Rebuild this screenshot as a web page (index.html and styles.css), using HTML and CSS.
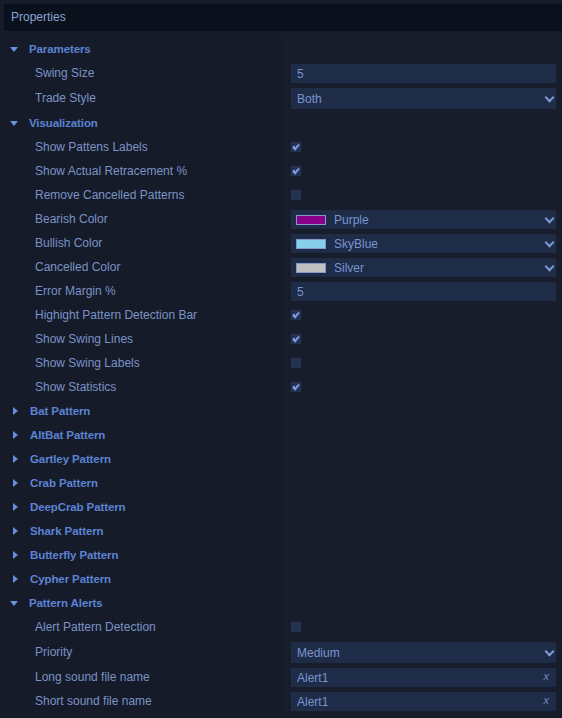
FILE: index.html
```html
<!DOCTYPE html>
<html>
<head>
<meta charset="utf-8">
<link rel="stylesheet" href="styles.css">
</head>
<body>
<div class="panel">
  <div class="title">Properties</div>
  <div class="list">
    <div class="row section"><span class="tri down"></span><span class="sec-label">Parameters</span></div>
    <div class="row"><span class="label">Swing Size</span><div class="input">5</div></div>
    <div class="row tall"><span class="label">Trade Style</span><div class="input select tallin">Both<span class="chev"></span></div></div>

    <div class="row section"><span class="tri down"></span><span class="sec-label">Visualization</span></div>
    <div class="row"><span class="label">Show Pattens Labels</span><span class="check on"></span></div>
    <div class="row"><span class="label">Show Actual Retracement %</span><span class="check on"></span></div>
    <div class="row"><span class="label">Remove Cancelled Patterns</span><span class="check"></span></div>
    <div class="row"><span class="label">Bearish Color</span><div class="input select"><span class="swatch purple"></span>Purple<span class="chev"></span></div></div>
    <div class="row"><span class="label">Bullish Color</span><div class="input select"><span class="swatch skyblue"></span>SkyBlue<span class="chev"></span></div></div>
    <div class="row"><span class="label">Cancelled Color</span><div class="input select"><span class="swatch silver"></span>Silver<span class="chev"></span></div></div>
    <div class="row"><span class="label">Error Margin %</span><div class="input">5</div></div>
    <div class="row"><span class="label">Highight Pattern Detection Bar</span><span class="check on"></span></div>
    <div class="row"><span class="label">Show Swing Lines</span><span class="check on"></span></div>
    <div class="row"><span class="label">Show Swing Labels</span><span class="check"></span></div>
    <div class="row"><span class="label">Show Statistics</span><span class="check on"></span></div>

    <div class="row section"><span class="tri right"></span><span class="sec-label">Bat Pattern</span></div>
    <div class="row section"><span class="tri right"></span><span class="sec-label">AltBat Pattern</span></div>
    <div class="row section"><span class="tri right"></span><span class="sec-label">Gartley Pattern</span></div>
    <div class="row section"><span class="tri right"></span><span class="sec-label">Crab Pattern</span></div>
    <div class="row section"><span class="tri right"></span><span class="sec-label">DeepCrab Pattern</span></div>
    <div class="row section"><span class="tri right"></span><span class="sec-label">Shark Pattern</span></div>
    <div class="row section"><span class="tri right"></span><span class="sec-label">Butterfly Pattern</span></div>
    <div class="row section"><span class="tri right"></span><span class="sec-label">Cypher Pattern</span></div>

    <div class="row section"><span class="tri down"></span><span class="sec-label">Pattern Alerts</span></div>
    <div class="row"><span class="label">Alert Pattern Detection</span><span class="check"></span></div>
    <div class="row tall"><span class="label">Priority</span><div class="input select tallin">Medium<span class="chev"></span></div></div>
    <div class="row"><span class="label">Long sound file name</span><div class="input">Alert1<span class="clear">x</span></div></div>
    <div class="row"><span class="label">Short sound file name</span><div class="input">Alert1<span class="clear">x</span></div></div>
  </div>
</div>
</body>
</html>
```

FILE: styles.css
```css
html, body {
  margin: 0;
  padding: 0;
  background: #161c2a;
  font-family: "Liberation Sans", Arial, sans-serif;
  font-size: 12px;
  width: 562px;
  height: 718px;
  overflow: hidden;
}

.panel {
  padding-top: 4px;
}

.title {
  margin-left: 4px;
  height: 27px;
  line-height: 27px;
  background: #0a111d;
  color: #8aa2d2;
  padding-left: 7px;
}

.list {
  margin-top: 6px;
  background: linear-gradient(to right, #151b28 0, #151b28 283px, #171d2b 283px);
}

.row {
  position: relative;
  display: grid;
  grid-template-columns: 291px 265px;
  align-items: center;
  height: 24px;
}

.row.tall {
  height: 26px;
}

.label {
  padding-left: 35px;
  color: #7b93c7;
  white-space: nowrap;
}

.section {
  display: flex;
  align-items: center;
}

.sec-label {
  font-weight: bold;
  font-size: 11.5px;
  color: #5c83d4;
  letter-spacing: -0.1px;
}

.tri {
  display: block;
  width: 0;
  height: 0;
}

.tri.down {
  margin-left: 10px;
  margin-right: 11px;
  border-left: 4.5px solid transparent;
  border-right: 4.5px solid transparent;
  border-top: 5px solid #6c90d8;
}

.tri.right {
  margin-left: 13px;
  margin-right: 12px;
  border-top: 4.5px solid transparent;
  border-bottom: 4.5px solid transparent;
  border-left: 5px solid #6c90d8;
}

.input {
  position: relative;
  display: flex;
  align-items: center;
  height: 19px;
  margin-top: 1px;
  background: #1f2c48;
  color: #7895d0;
  padding-left: 6px;
  box-sizing: border-box;
}

.input.tallin {
  height: 21px;
  margin-top: 1px;
}

.chev {
  position: absolute;
  right: 3px;
  top: 50%;
  width: 5px;
  height: 5px;
  margin-top: -5px;
  border-right: 2px solid #7b9ad8;
  border-bottom: 2px solid #7b9ad8;
  transform: rotate(45deg);
}

.clear {
  position: absolute;
  right: 7px;
  top: 2px;
  color: #7088b8;
  font-style: italic;
  font-size: 11px;
}

.check {
  display: block;
  width: 10px;
  height: 10px;
  background: #24314f;
  position: relative;
}

.check.on::after {
  content: "";
  position: absolute;
  left: 3px;
  top: 1px;
  width: 2px;
  height: 5px;
  border-right: 2px solid #7c9be0;
  border-bottom: 2px solid #7c9be0;
  transform: rotate(40deg);
}

.check.on::before {
  content: "";
  position: absolute;
  left: 2px;
  top: 4px;
  width: 2px;
  height: 2px;
  background: #7c9be0;
}

.swatch {
  display: block;
  width: 28px;
  height: 8px;
  border: 1px solid #8299c9;
  margin-left: -1px;
  margin-right: 8px;
}

.swatch.purple { background: #8b008b; }
.swatch.skyblue { background: #87ceeb; }
.swatch.silver { background: #c0c0c0; }
```
